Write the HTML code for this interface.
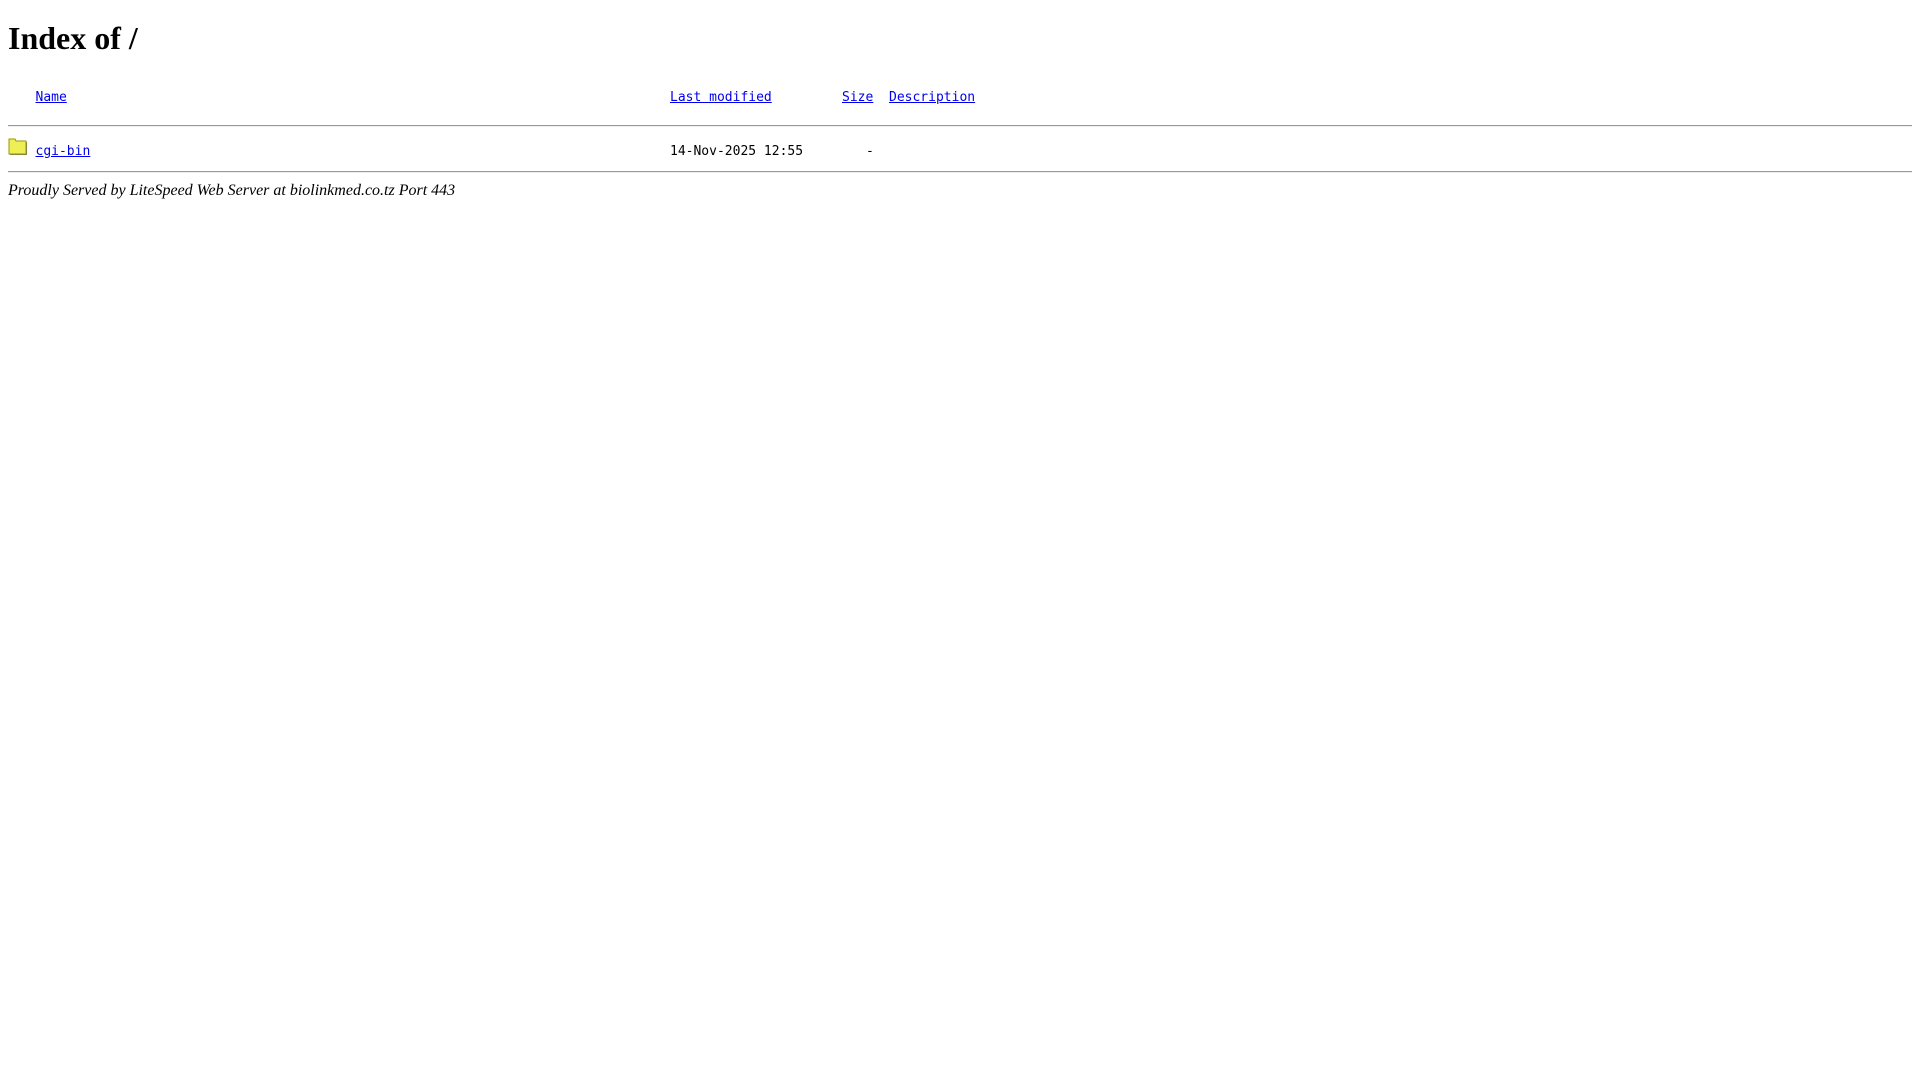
<!DOCTYPE html>
<html><head><meta charset="utf-8"><style>
body{margin:0;background:#fff;width:1920px;height:1080px;position:relative;overflow:hidden}
.a{position:absolute;white-space:pre}
.m{font-family:"DejaVu Sans Mono","Liberation Mono",monospace;font-size:13px;line-height:15px;color:#000}
.m a{color:#0000ee;text-decoration:underline}
h1{position:absolute;left:8px;top:20px;margin:0;font:bold 32px/37px "Liberation Serif",serif}
.hr{position:absolute;left:8px;width:1904px;height:0;border-top:1px solid #9a9a9a;border-bottom:1px solid #eee}
.f{font:italic 16px/18px "Liberation Serif",serif}
</style></head><body>
<h1>Index of /</h1>
<div class="a m" style="left:35.5px;top:90px"><a>Name</a></div>
<div class="a m" style="left:670px;top:90px"><a>Last modified</a></div>
<div class="a m" style="left:842px;top:90px"><a>Size</a></div>
<div class="a m" style="left:889px;top:90px"><a>Description</a></div>
<div class="hr" style="top:125px"></div>
<svg class="a" style="left:8px;top:137px" width="21" height="20" viewBox="0 0 21 20">
<path d="M2 3h6l1 2h10v13H2z" fill="#777"/>
<path d="M1 2h6l1 2h10v13H1z" fill="#eeee55" stroke="#999900" stroke-width="1"/>
</svg>
<div class="a m" style="left:35.5px;top:144px"><a>cgi-bin</a></div>
<div class="a m" style="left:670px;top:144px">14-Nov-2025 12:55</div>
<div class="a m" style="left:866px;top:144px">-</div>
<div class="hr" style="top:171px"></div>
<div class="a f" style="left:8px;top:181.5px">Proudly Served by LiteSpeed Web Server at biolinkmed.co.tz Port 443</div>
</body></html>
